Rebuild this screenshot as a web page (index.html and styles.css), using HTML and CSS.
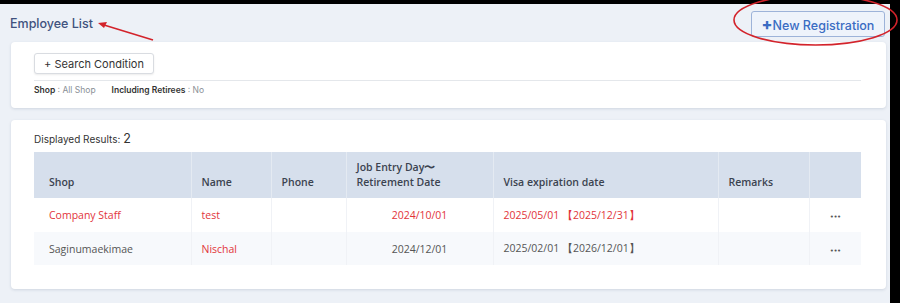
FILE: index.html
```html
<!DOCTYPE html>
<html lang="en">
<head>
    <meta charset="UTF-8">
    <meta name="viewport" content="width=device-width, initial-scale=1.0">
    <link rel="stylesheet" href="styles.css">
</head>
<body>
    <div class="page">
        <div class="page-header">
            <h1 class="page-title">Employee List</h1>
            <button class="btn-new"><span class="plus">+</span>New Registration</button>
        </div>

        <div class="card card-search">
            <button class="btn-search">+ Search Condition</button>
            <div class="filters">
                <span class="filter"><b>Shop</b> : All Shop</span>
                <span class="filter"><b>Including Retirees</b> : No</span>
            </div>
        </div>

        <div class="card card-results">
            <div class="result-count">Displayed Results: <span class="count">2</span></div>
            <table class="staff-table">
                <thead>
                    <tr>
                        <th class="col-shop">Shop</th>
                        <th class="col-name">Name</th>
                        <th class="col-phone">Phone</th>
                        <th class="col-job">Job Entry Day〜<br>Retirement Date</th>
                        <th class="col-visa">Visa expiration date</th>
                        <th class="col-remarks">Remarks</th>
                        <th class="col-menu"></th>
                    </tr>
                </thead>
                <tbody>
                    <tr class="alert">
                        <td class="col-shop">Company Staff</td>
                        <td class="col-name red">test</td>
                        <td></td>
                        <td class="center">2024/10/01</td>
                        <td>2025/05/01 【2025/12/31】</td>
                        <td></td>
                        <td class="center"><span class="dots">•••</span></td>
                    </tr>
                    <tr>
                        <td class="col-shop">Saginumaekimae</td>
                        <td class="col-name red">Nischal</td>
                        <td></td>
                        <td class="center">2024/12/01</td>
                        <td>2025/02/01 【2026/12/01】</td>
                        <td></td>
                        <td class="center"><span class="dots">•••</span></td>
                    </tr>
                </tbody>
            </table>
        </div>

        <!-- annotations drawn on top of the screenshot -->
        <svg class="annotations" width="900" height="60" viewBox="0 0 900 60">
            <line x1="153" y1="40" x2="104" y2="25" stroke="#d3232b" stroke-width="1.6"/>
            <polygon points="98,23 107,22 104,28" fill="#d3232b"/>
            <ellipse cx="815.5" cy="20" rx="81.5" ry="25" fill="none" stroke="#d3232b" stroke-width="1.6"/>
        </svg>
    </div>
</body>
</html>
```

FILE: styles.css
```css
body {
    margin: 0;
    padding: 0;
    background-color: #000;
    font-family: "Open Sans", "Noto Sans", sans-serif;
    overflow: hidden;
}

.page {
    position: relative;
    width: 890px;
    height: 299px;
    margin-top: 4px;
    background-color: #edf1f7;
}

.page-header {
    display: flex;
    justify-content: space-between;
    align-items: center;
    height: 38px;
    padding: 0 5px 0 10px;
}

.page-title {
    margin: 0;
    font-family: Inter, "Noto Sans", sans-serif;
    font-size: 12.5px;
    font-weight: 500;
    color: #40527e;
}

.btn-new {
    height: 26px;
    width: 134px;
    margin-top: 2px;
    padding: 0;
    font-family: Inter, "Noto Sans", sans-serif;
    font-size: 12.5px;
    font-weight: 500;
    color: #3a6cc3;
    background-color: #eef3fb;
    border: 1px solid #9db3d9;
    border-radius: 3px;
}

.btn-new .plus {
    font-weight: 800;
    font-size: 16px;
}

.card {
    margin: 0 4px 0 11px;
    background-color: #fff;
    border-radius: 4px;
    box-shadow: 0 1px 3px rgba(40, 60, 100, 0.15);
}

.card-search {
    height: 66px;
    box-sizing: border-box;
    padding: 11px 25px 0 23px;
}

.btn-search {
    display: block;
    height: 21px;
    width: 120px;
    padding: 0;
    font-family: Inter, "Noto Sans", sans-serif;
    font-size: 11px;
    color: #333;
    background-color: #fff;
    border: 1px solid #d9dce1;
    border-radius: 3px;
    box-shadow: 0 1px 2px rgba(0, 0, 0, 0.08);
}

.filters {
    display: flex;
    gap: 16px;
    margin-top: 6px;
    padding-top: 4px;
    border-top: 1px solid #e4e7eb;
    font-family: Inter, "Noto Sans", sans-serif;
    font-size: 8.5px;
    color: #8a8f96;
}

.filter b {
    font-weight: 600;
    color: #333;
}

.card-results {
    margin-top: 12px;
    height: 169px;
    box-sizing: border-box;
    padding: 11px 25px 0 23px;
}

.result-count {
    height: 21px;
    font-family: Inter, "Noto Sans", sans-serif;
    font-size: 10px;
    color: #333;
    line-height: 16px;
}

.result-count .count {
    font-size: 12.5px;
}

.staff-table {
    width: 827px;
    border-collapse: collapse;
    table-layout: fixed;
    font-size: 10.5px;
}

.staff-table th {
    height: 46px;
    padding: 0 10px 8px;
    box-sizing: border-box;
    vertical-align: bottom;
    text-align: left;
    font-weight: 600;
    color: #3b4350;
    line-height: 15px;
    background-color: #d6dfec;
    border-left: 1px solid #e4eaf2;
}

.staff-table td {
    height: 34px;
    padding: 0 10px;
    color: #555;
    border-left: 1px solid #f0f2f6;
}

.staff-table th:first-child,
.staff-table td:first-child {
    border-left: none;
    padding-left: 15px;
}

.staff-table tbody tr:nth-child(2) td {
    background-color: #f7f9fc;
    height: 33px;
}

.staff-table tr.alert td,
.staff-table td.red {
    color: #e2343a;
}

.staff-table td.center {
    text-align: center;
}

.staff-table tr td .dots {
    font-family: "DejaVu Sans", sans-serif;
    font-size: 7px;
    letter-spacing: -0.5px;
    color: #555;
}

.col-shop { width: 157px; }
.col-name { width: 80px; }
.col-phone { width: 75px; }
.col-job { width: 147px; }
.col-visa { width: 225px; }
.col-remarks { width: 91px; }
.col-menu { width: 52px; }

.annotations {
    position: absolute;
    top: -4px;
    left: 0;
    pointer-events: none;
}
```
